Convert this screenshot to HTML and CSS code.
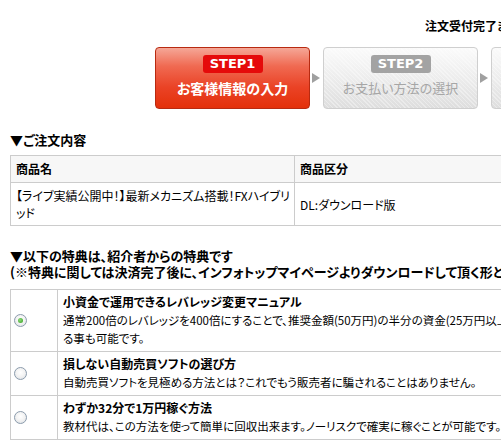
FILE: index.html
```html
<!DOCTYPE html>
<html lang="ja">
<head>
<meta charset="utf-8">
<title>注文</title>
<link rel="stylesheet" href="styles.css">
</head>
<body>
<div class="viewport">
  <div class="page">
    <div class="flow-title">注文受付完了までの流れ</div>
    <div class="steps">
      <div class="step step-active">
        <span class="badge">STEP1</span>
        <span class="label">お客様情報の入力</span>
      </div>
      <div class="arrow"></div>
      <div class="step">
        <span class="badge">STEP2</span>
        <span class="label">お支払い方法の選択</span>
      </div>
      <div class="arrow"></div>
      <div class="step">
        <span class="badge">STEP3</span>
        <span class="label">注文受付完了</span>
      </div>
    </div>

    <h2 class="heading heading-order">▼ご注文内容</h2>
    <table class="order">
      <tr>
        <th class="col-name">商品名</th>
        <th>商品区分</th>
      </tr>
      <tr>
        <td class="col-name">【ライブ実績公開中！】最新メカニズム搭載！FXハイブリッド</td>
        <td>DL:ダウンロード版</td>
      </tr>
    </table>

    <div class="bonus-head">
      <h2 class="heading">▼以下の特典は、紹介者からの特典です</h2>
      <p class="heading">(※特典に関しては決済完了後に、インフォトップマイページよりダウンロードして頂く形となります。)</p>
    </div>
    <table class="bonus">
      <tr>
        <td class="radio-cell"><span class="radio checked"></span></td>
        <td class="text-cell">
          <div class="b-title">小資金で運用できるレバレッジ変更マニュアル</div>
          <div class="b-desc">通常200倍のレバレッジを400倍にすることで、推奨金額(50万円)の半分の資金(25万円以上)で運用す<br>る事も可能です。</div>
        </td>
      </tr>
      <tr>
        <td class="radio-cell"><span class="radio"></span></td>
        <td class="text-cell">
          <div class="b-title">損しない自動売買ソフトの選び方</div>
          <div class="b-desc">自動売買ソフトを見極める方法とは？これでもう販売者に騙されることはありません。</div>
        </td>
      </tr>
      <tr>
        <td class="radio-cell"><span class="radio"></span></td>
        <td class="text-cell">
          <div class="b-title">わずか32分で1万円稼ぐ方法</div>
          <div class="b-desc">教材代は、この方法を使って簡単に回収出来ます。ノーリスクで確実に稼ぐことが可能です。5万円の利益も狙えます。</div>
        </td>
      </tr>
    </table>
  </div>
</div>
</body>
</html>
```

FILE: styles.css
```css
html, body {
  margin: 0;
  padding: 0;
  background: #fff;
}
body {
  font-family: "Noto Sans CJK JP", "Liberation Sans", sans-serif;
  font-size: 12px;
  color: #000;
  font-feature-settings: "palt";
}
.viewport {
  width: 501px;
  height: 442px;
  overflow: hidden;
}
.page {
  width: 820px;
  padding-left: 10px;
}
.flow-title {
  padding-top: 18px;
  margin-left: 415px;
  font-weight: bold;
  font-size: 12px;
  line-height: 16px;
  white-space: nowrap;
}
.steps {
  display: flex;
  align-items: center;
  margin-top: 13px;
  margin-left: 145px;
}
.step {
  width: 155px;
  height: 62px;
  box-sizing: border-box;
  border: 1px solid #cfcfcf;
  border-radius: 4px;
  display: flex;
  flex-direction: column;
  align-items: center;
  padding-top: 7px;
  background:
    repeating-linear-gradient(45deg, rgba(255,255,255,0.35) 0 1px, transparent 1px 3px),
    linear-gradient(#fbfbfb, #dedede);
  white-space: nowrap;
}
.badge {
  width: 60px;
  height: 18px;
  border-radius: 3px;
  background: #a3a3a3;
  color: #fff;
  font-family: "DejaVu Sans", "Liberation Sans", sans-serif;
  font-weight: bold;
  font-size: 13px;
  line-height: 18px;
  text-align: center;
}
.label {
  margin-top: 5px;
  font-size: 13px;
  line-height: 20px;
  color: #a6a6a6;
}
.step-active {
  border-color: #b82a10;
  background: linear-gradient(#f5a797 0%, #f06a52 30%, #ea4326 65%, #e4300a 100%);
}
.step-active .badge {
  background: #e50a0a;
}
.step-active .label {
  color: #fff;
  font-weight: bold;
  font-size: 14px;
}
.arrow {
  width: 13px;
  height: 10px;
  position: relative;
}
.arrow::after {
  content: "";
  position: absolute;
  left: 2px;
  top: 0;
  border-left: 8px solid #a0a0a0;
  border-top: 5px solid transparent;
  border-bottom: 5px solid transparent;
}
.heading {
  margin: 0;
  font-size: 13px;
  font-weight: bold;
  line-height: 16px;
  white-space: nowrap;
}
.heading-order {
  margin-top: 23px;
}
.bonus-head {
  margin-top: 22px;
}
table {
  border-collapse: collapse;
}
.order {
  margin-top: 7px;
  width: 700px;
}
.order th, .order td {
  border: 1px solid #cccccc;
  text-align: left;
  vertical-align: middle;
  padding: 5px 5px;
  line-height: 16px;
}
.order th {
  background: #f7f7f7;
  font-weight: bold;
}
.order td {
  padding: 4px 5px 4px;
  line-height: 17px;
}
.order .col-name {
  width: 277px;
  padding-right: 1px;
}
.bonus {
  margin-top: 9px;
  width: 760px;
}
.bonus td {
  border: 1px solid #cccccc;
  vertical-align: middle;
}
.radio-cell {
  width: 43px;
  padding: 0 0 0 3px;
}
.text-cell {
  padding: 3px 5px 4px;
  line-height: 18px;
}
.b-title {
  font-weight: bold;
}
.b-desc {
  white-space: nowrap;
  font-size: 11.5px;
}
.radio {
  display: block;
  width: 13px;
  height: 13px;
  box-sizing: border-box;
  border-radius: 50%;
  border: 1px solid #8c9cad;
  background: radial-gradient(circle at 50% 40%, #ffffff 0%, #f2f2f2 50%, #d8dde2 100%);
  position: relative;
}
.radio.checked::after {
  content: "";
  position: absolute;
  left: 3px;
  top: 3px;
  width: 5px;
  height: 5px;
  border-radius: 50%;
  background: radial-gradient(circle at 40% 40%, #8fdc7a, #2f9a1e);
}
```
